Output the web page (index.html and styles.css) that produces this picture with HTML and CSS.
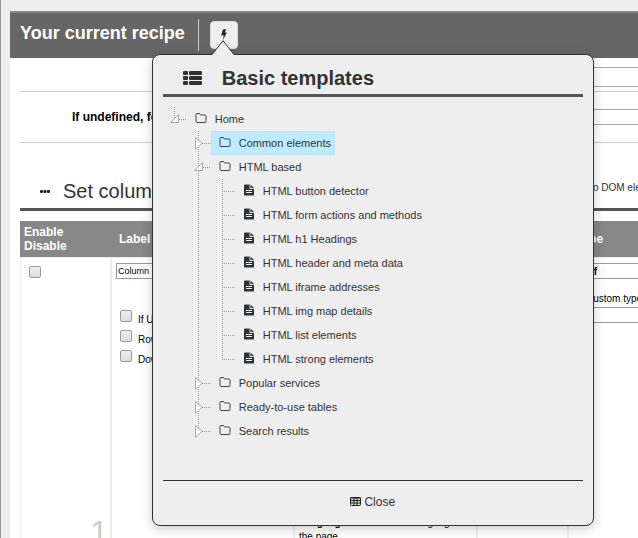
FILE: index.html
```html
<!DOCTYPE html>
<html lang="en">
<head>
  <meta charset="utf-8">
  <meta name="viewport" content="width=device-width, initial-scale=1.0">
  <title>Your current recipe</title>
  <link rel="stylesheet" href="styles.css">
</head>
<body>
  <svg class="sprite" aria-hidden="true">
    <!-- tree toggles, 24x24 -->
    <symbol id="tree-leaf" viewBox="0 0 24 24">
      <path class="dots" d="M11.5 0V13M11 12.5H24"/>
    </symbol>
    <symbol id="tree-open" viewBox="0 0 24 24">
      <path class="dots" d="M11.5 0V12M16 12.5H24"/>
      <path d="M7.5 15.5L15.5 7.5V15.5Z" fill="#fff" stroke="#aaa"/>
    </symbol>
    <symbol id="tree-closed" viewBox="0 0 24 24">
      <path class="dots" d="M11.5 0V12M15 12.5H24"/>
      <path d="M8.5 6.5L15 12.5L8.5 18.5Z" fill="#fff" stroke="#aaa"/>
    </symbol>
    <symbol id="folder" viewBox="0 0 12 12">
      <path d="M1 2.5Q1 1.5 2 1.5H4.5L5.5 3H10Q11 3 11 4V9.5Q11 10.5 10 10.5H2Q1 10.5 1 9.5Z" fill="none" stroke="#444"/>
    </symbol>
    <symbol id="file" viewBox="0 0 12 12">
      <path d="M2 0.5H6.5V4Q6.5 5 7.5 5H11V11Q11 11.5 10.5 11.5H2Q1 11.5 1 11V1Q1 0.5 2 0.5Z" fill="#2e3436"/>
      <path d="M7.5 0.5L11 4H7.5Z" fill="#2e3436"/>
      <path d="M3 6.5H9M3 8.5H9" stroke="#eee"/>
    </symbol>
  </svg>

  <div class="page">
    <header class="page-header">
      <h1>Your current recipe</h1>
      <div class="templates">
        <button class="templates-button" type="button" aria-label="Basic templates">
          <svg width="8" height="12" viewBox="0 0 8 12"><path d="M3 0.5L6 0L4.8 3.8L7 3.3L3 11L3.7 6L1 6.7Z" fill="#222"/></svg>
        </button>

        <div class="popover" role="dialog" aria-labelledby="popover-title">
          <svg class="popover-arrow" width="22" height="15" viewBox="0 0 22 15"><path d="M0.5 14L11 0.7L21.5 14V15H0.5Z" fill="#eee"/><path d="M0.5 14L11 0.7L21.5 14" fill="none" stroke="#333"/></svg>
          <div class="popover-title">
            <svg width="19" height="15" viewBox="0 0 19 15" fill="#2e3436"><rect x="0" y="0" width="5" height="4" rx="1"/><rect x="6" y="0" width="13" height="4" rx="1"/><rect x="0" y="5" width="5" height="4" rx="1"/><rect x="6" y="5" width="13" height="4" rx="1"/><rect x="0" y="10" width="5" height="4" rx="1"/><rect x="6" y="10" width="13" height="4" rx="1"/></svg>
            <h2 id="popover-title">Basic templates</h2>
          </div>

          <ul class="tree">
            <li>
              <div class="node"><button type="button" aria-label="Collapse"><svg><use href="#tree-open"/></svg></button><a href="#"><svg><use href="#folder"/></svg>Home</a></div>
              <ul>
                <li><div class="node"><button type="button" aria-label="Expand"><svg><use href="#tree-closed"/></svg></button><a href="#" class="hovered"><svg><use href="#folder"/></svg>Common elements</a></div></li>
                <li>
                  <div class="node"><button type="button" aria-label="Collapse"><svg><use href="#tree-open"/></svg></button><a href="#"><svg><use href="#folder"/></svg>HTML based</a></div>
                  <ul>
                    <li><div class="node"><svg><use href="#tree-leaf"/></svg><a href="#"><svg><use href="#file"/></svg>HTML button detector</a></div></li>
                    <li><div class="node"><svg><use href="#tree-leaf"/></svg><a href="#"><svg><use href="#file"/></svg>HTML form actions and methods</a></div></li>
                    <li><div class="node"><svg><use href="#tree-leaf"/></svg><a href="#"><svg><use href="#file"/></svg>HTML h1 Headings</a></div></li>
                    <li><div class="node"><svg><use href="#tree-leaf"/></svg><a href="#"><svg><use href="#file"/></svg>HTML header and meta data</a></div></li>
                    <li><div class="node"><svg><use href="#tree-leaf"/></svg><a href="#"><svg><use href="#file"/></svg>HTML iframe addresses</a></div></li>
                    <li><div class="node"><svg><use href="#tree-leaf"/></svg><a href="#"><svg><use href="#file"/></svg>HTML img map details</a></div></li>
                    <li><div class="node"><svg><use href="#tree-leaf"/></svg><a href="#"><svg><use href="#file"/></svg>HTML list elements</a></div></li>
                    <li><div class="node"><svg><use href="#tree-leaf"/></svg><a href="#"><svg><use href="#file"/></svg>HTML strong elements</a></div></li>
                  </ul>
                </li>
                <li><div class="node"><button type="button" aria-label="Expand"><svg><use href="#tree-closed"/></svg></button><a href="#"><svg><use href="#folder"/></svg>Popular services</a></div></li>
                <li><div class="node"><button type="button" aria-label="Expand"><svg><use href="#tree-closed"/></svg></button><a href="#"><svg><use href="#folder"/></svg>Ready-to-use tables</a></div></li>
                <li><div class="node"><button type="button" aria-label="Expand"><svg><use href="#tree-closed"/></svg></button><a href="#"><svg><use href="#folder"/></svg>Search results</a></div></li>
              </ul>
            </li>
          </ul>

          <div class="popover-footer">
            <button type="button" class="close-button">
              <svg width="11" height="9" viewBox="0 0 11 9"><rect x="0.5" y="0.5" width="10" height="8" rx="1" fill="#ddd" stroke="#222"/><path d="M0 1H11M0 3.5H11M0 6H11M4 0V9M7 0V9" stroke="#222"/></svg>
              Close
            </button>
          </div>
        </div>
      </div>
    </header>

    <main>
      <div class="form-row form-row-url">
        <label for="url">URL</label>
        <input type="text" id="url">
      </div>
      <div class="form-row">
        <label for="fallback">If undefined, follow</label>
        <input type="text" id="fallback">
      </div>

      <div class="section-title">
        <svg width="10" height="3" viewBox="0 0 10 3" fill="#222"><rect width="3" height="3" rx="1"/><rect x="3.5" width="3" height="3" rx="1"/><rect x="7" width="3" height="3" rx="1"/></svg>
        <h2>Set columns</h2>
        <span>Links to DOM elements</span>
      </div>

      <table>
        <colgroup>
          <col class="col-small"><col class="col-wide"><col class="col-wide"><col class="col-small"><col>
        </colgroup>
        <thead>
          <tr><th>Enable<br>Disable</th><th class="indent">Label</th><th>Description</th><th>Order</th><th class="indent">Type</th></tr>
        </thead>
        <tbody>
          <tr>
            <td>
              <div class="cell enable-cell">
                <input type="checkbox" aria-label="Enable column">
                <span class="number">1</span>
              </div>
            </td>
            <td>
              <div class="cell">
                <input type="text" class="small-input" value="Column 1" aria-label="Column label">
                <div class="options">
                  <label><input type="checkbox"><span>If Undefined</span></label>
                  <label><input type="checkbox"><span>Row filter</span></label>
                  <label><input type="checkbox"><span>Download</span></label>
                </div>
              </div>
            </td>
            <td><div class="cell description"><p><b>Language</b> as in the main language of the page</p></div></td>
            <td></td>
            <td>
              <div class="cell">
                <input type="text" class="small-input type-name" value="Href" aria-label="Type">
                <label for="custom" class="custom-label">Custom type</label>
                <input type="text" class="small-input" id="custom">
              </div>
            </td>
          </tr>
        </tbody>
      </table>
    </main>
  </div>
</body>
</html>
```
FILE: styles.css
```css
* {
  box-sizing: border-box;
}

html {
  overflow: hidden;
}

body {
  margin: 0;
  min-height: 100vh;
  padding: 11px 0 0 9px;
  border-left: 1px solid #999;
  background-color: #eee;
  color: #222;
  font-family: "Liberation Sans", Arial, sans-serif;
  font-size: 11px;
}

button {
  font-family: inherit;
  cursor: pointer;
}

svg {
  flex: none;
  display: block;
}

.sprite {
  position: absolute;
  width: 0;
  height: 0;
}

.page {
  background-color: #fff;
}

/* Header */
.page-header {
  display: flex;
  align-items: center;
  height: 47px;
  padding: 0 10px 2px;
  border-top: 2px solid #888;
  background-color: #666;
}

.page-header h1 {
  margin: 0;
  padding: 0 13px 4px 0;
  border-right: 1px solid #ccc;
  color: #fff;
  font-size: 18px;
  line-height: 28px;
}

.templates {
  position: relative;
  margin-left: 11px;
}

.templates-button {
  display: flex;
  align-items: center;
  justify-content: center;
  width: 28px;
  height: 28px;
  padding: 0;
  border: 1px solid #ddd;
  border-radius: 4px;
  background-color: #eee;
}

/* Popover */
.popover {
  position: absolute;
  z-index: 10;
  top: 33px;
  left: -58px;
  width: 442px;
  padding: 0 10px;
  border: 1px solid #333;
  border-radius: 8px;
  background-color: #eee;
  box-shadow: 0 3px 12px rgba(0, 0, 0, 0.2);
}

.popover-arrow {
  position: absolute;
  top: -15px;
  left: 59px;
}

.popover-title {
  display: flex;
  align-items: center;
  gap: 20px;
  height: 42px;
  padding: 8px 0 0 20px;
  border-bottom: 3px solid #555;
}

.popover-title h2 {
  margin: 0;
  color: #333;
  font-size: 20px;
}

.tree {
  min-height: 383px;
  padding-top: 10px;
}

.tree,
.tree ul {
  margin: 0;
  padding-left: 0;
  list-style: none;
}

.tree ul {
  padding-left: 24px;
}

.tree li:not(:last-child) {
  background: linear-gradient(#999 1px, transparent 1px) 11px 0 / 1px 2px repeat-y;
}

.node {
  display: flex;
  height: 24px;
}

.node button {
  padding: 0;
  border: none;
  background: none;
}

.node svg {
  width: 24px;
  height: 24px;
}

.dots {
  fill: none;
  stroke: #999;
  stroke-dasharray: 1 1;
}

.node a {
  display: flex;
  align-items: center;
  padding-right: 4px;
  color: #333;
  text-decoration: none;
}

.node a svg {
  width: 12px;
  height: 12px;
  margin: 0 8px 2px;
}

.node a.hovered {
  background-color: #beebff;
  box-shadow: inset 0 0 1px #999;
}

.popover-footer {
  display: flex;
  align-items: center;
  justify-content: center;
  height: 45px;
  padding-bottom: 2px;
  border-top: 1px solid #333;
}

.close-button {
  display: flex;
  align-items: center;
  gap: 3px;
  padding: 0;
  border: none;
  background: none;
  color: #333;
  font-size: 12px;
}

/* Recipe form, wide columns are clipped at the right edge */
main {
  padding-left: 10px;
  overflow: hidden;
}

.form-row,
.section-title,
table {
  min-width: 740px;
}

.form-row {
  display: flex;
  align-items: center;
  height: 51px;
  border-bottom: 1px solid #ccc;
}

.form-row label {
  width: 240px;
  padding-left: 52px;
  color: #000;
  font-size: 12px;
  font-weight: bold;
}

.form-row input {
  flex: 1;
  height: 16px;
  border: 1px solid #aaa;
}

.form-row-url {
  height: 34px;
  padding-top: 5px;
}

.form-row-url label {
  padding-left: 160px;
}

.form-row-url input {
  height: 20px;
}

.section-title {
  display: flex;
  align-items: center;
  gap: 13px;
  height: 68px;
  padding: 31px 0 0 20px;
  border-bottom: 3px solid #555;
}

.section-title h2 {
  flex: none;
  width: 488px;
  margin: 0;
  color: #333;
  font-size: 20px;
  font-weight: normal;
}

.section-title span {
  padding-bottom: 8px;
  color: #333;
  font-size: 10px;
}

/* Columns table */
table {
  width: 100%;
  margin-top: 10px;
  border-spacing: 0;
  table-layout: fixed;
}

.col-small {
  width: 91px;
}

.col-wide {
  width: 183px;
}

th {
  height: 36px;
  padding: 0 4px;
  background-color: #888;
  color: #fff;
  font-size: 12px;
  line-height: 14px;
  text-align: left;
}

th.indent {
  padding-left: 8px;
}

td {
  padding: 0;
  border: 1px solid #eee;
  vertical-align: top;
}

.cell {
  display: flex;
  flex-direction: column;
  min-height: 292px;
  padding: 5px 4px;
  color: #000;
  font-size: 10px;
}

.enable-cell {
  align-items: flex-start;
  justify-content: space-between;
  padding: 8px 2px 0 8px;
}

.number {
  align-self: flex-end;
  color: #ccc;
  font-size: 32px;
  line-height: 36px;
}

.description {
  justify-content: flex-end;
  padding-bottom: 6px;
}

.description p {
  margin: 0;
  line-height: 14px;
}

input[type="checkbox"] {
  appearance: none;
  width: 12px;
  height: 12px;
  margin: 0;
  border: 1px solid #999;
  border-radius: 2px;
  background: linear-gradient(#eee, #ddd);
}

.small-input {
  height: 16px;
  padding: 0 1px;
  border: 1px solid #999;
  font-family: inherit;
  font-size: 9px;
}

.options {
  display: flex;
  flex-direction: column;
  margin: 31px 0 0 4px;
}

.options label {
  display: flex;
  align-items: flex-start;
  gap: 6px;
  height: 20px;
}

.options span {
  padding-top: 4px;
}

.type-name {
  padding-left: 3px;
  font-size: 10px;
  font-weight: bold;
}

.custom-label {
  margin: 14px 0 3px 13px;
}
```
